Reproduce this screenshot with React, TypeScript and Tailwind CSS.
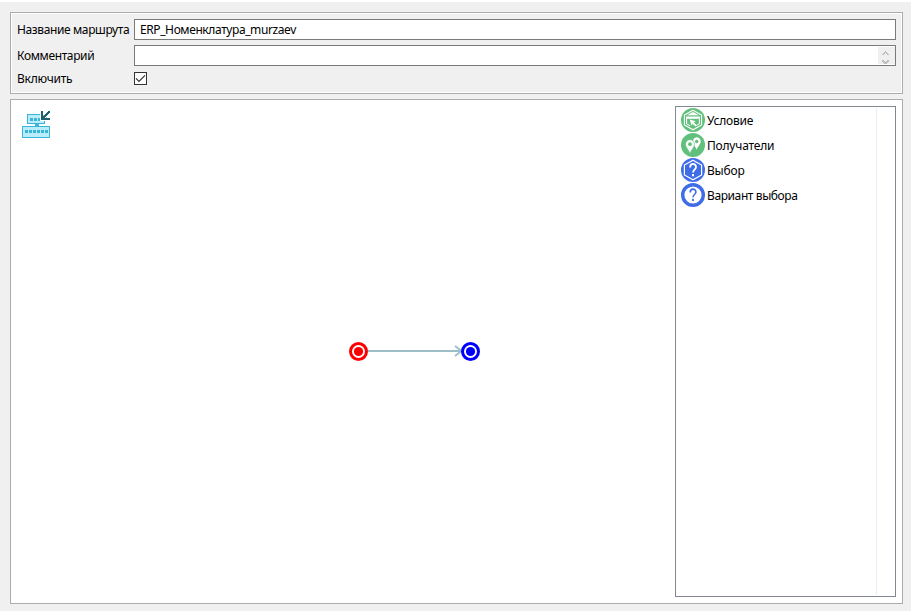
import type { ReactNode } from "react";

function KeyboardIcon() {
  return (
    <svg className="block" width="30" height="28" viewBox="0 0 30 28" shapeRendering="crispEdges">
      <path d="M5.500 4.500h17v9h-17z" fill="#b9edfb" stroke="#3ab5da" />
      <path d="M13 14h4v2h-4z" fill="#3ab5da" />
      <path d="M.5 16.500h27v11h-27z" fill="#b9edfb" stroke="#3ab5da" />
      <path d="M8 8h3v3h-3zM12 8h3v3h-3zM16 8h2v3h-2z" fill="#3ab5da" />
      <path d="M3 20h3v3h-3zM7 20h3v3h-3zM11 20h3v3h-3zM15 20h3v3h-3zM19 20h3v3h-3zM23 20h3v3h-3z" fill="#3ab5da" />
      <path d="M18 0h11v11h-11z" fill="#fff" />
      <path d="M19 1h2v7h7v2h-9z" fill="#1f5f6e" />
      <path d="M26 1h2v2h-1v1h-1v1h-1v1h-1v1h-1v1h-2v-2h1v-1h1v-1h1v-1h1v-1h1z" fill="#1f5f6e" />
      <path d="M21 5h1v1h-1zM24 7h1v1h-1z" fill="#7fe0b8" />
    </svg>
  );
}

function ConditionIcon() {
  return (
    <svg className="block" width="24" height="24" viewBox="0 0 24 24" fill="none">
      <circle cx="12" cy="12" r="12" fill="#61c07c" />
      <path d="M12 2.200l8.600 4.900v9.800L12 21.800l-8.600-4.900V7.100z" stroke="#fff" strokeWidth="1.100" />
      <path d="M6 7.300L12 4l6 3.300z" fill="#fff" />
      <path d="M5 8.500h14v2.300H5z" fill="#fff" />
      <path d="M5.600 10.800v5l3.600 2M18.400 10.800v5l-3.200 1.800" stroke="#fff" strokeWidth="1" />
      <path d="M8.800 11.600l6 1.700-1.900 1.200 2.700 2.700-1.300 1.300-2.700-2.700-1.100 1.900z" fill="#fff" />
    </svg>
  );
}

function RecipientsIcon() {
  return (
    <svg className="block" width="24" height="24" viewBox="0 0 24 24">
      <circle cx="12" cy="12" r="12" fill="#61c07c" />
      <path d="M15.500 4.300a4.200 4.200 0 0 1 4.200 4.200c0 2.400-2.600 4.700-4.200 8.200-.6-1.800-1.500-2.900-2.200-4.100A5 5 0 0 0 12 8a4 4 0 0 1 3.500-3.700z" fill="#fff" />
      <circle cx="15.700" cy="8.500" r="1.700" fill="#61c07c" />
      <path d="M9 6.800a4.400 4.400 0 0 0-4.400 4.400c0 3 2.900 5 4.400 9.300 1.500-4.300 4.400-6.300 4.400-9.300A4.400 4.400 0 0 0 9 6.800z" fill="#fff" stroke="#61c07c" strokeWidth=".5" />
      <circle cx="9" cy="11.200" r="1.900" fill="#61c07c" />
    </svg>
  );
}

function ChoiceIcon() {
  return (
    <svg className="block" width="24" height="24" viewBox="0 0 24 24" fill="none">
      <circle cx="12" cy="12" r="12" fill="#3f6de8" />
      <path d="M12 2.200l8.600 4.900v9.800L12 21.800l-8.600-4.900V7.100z" stroke="#fff" strokeWidth="1.200" />
      <path d="M9.100 9.400c0-4.600 5.900-4.400 5.900-.4 0 2.600-3 2.700-3 5.500" stroke="#fff" strokeWidth="1.800" />
      <path d="M11 16h2v2.200h-2z" fill="#fff" />
    </svg>
  );
}

function VariantIcon() {
  return (
    <svg className="block" width="24" height="24" viewBox="0 0 24 24" fill="none">
      <circle cx="12" cy="12" r="10.300" fill="#fff" stroke="#3f6de8" strokeWidth="3.400" />
      <path d="M9.200 9.400c0-4.400 5.700-4.300 5.700-.4 0 2.500-2.900 2.600-2.900 5.300" stroke="#3f6de8" strokeWidth="1.600" />
      <path d="M11.100 15.800h1.800v2.200h-1.800z" fill="#3f6de8" />
    </svg>
  );
}

function Node({ color }: { color: string }) {
  return (
    <svg className="block" width="19" height="19" viewBox="0 0 19 19">
      <circle cx="9.500" cy="9.500" r="8" fill="#fff" stroke={color} strokeWidth="3" />
      <circle cx="9.500" cy="9.500" r="4.600" fill={color} />
    </svg>
  );
}

function ToolRow({ icon, children }: { icon: ReactNode; children: ReactNode }) {
  return (
    <li className="flex h-[25px] items-start gap-[2px]">
      {icon}
      <span className="mt-px leading-6 whitespace-nowrap">{children}</span>
    </li>
  );
}

export default function App() {
  return (
    <div className="flex h-[611px] w-[911px] flex-col border-t-2 border-white bg-[#f0f0f0] pt-[10px] pr-2 pl-[10px] font-['Noto_Sans','Open_Sans',sans-serif] text-[12px] text-black">
      <section className="h-[82px] w-[893px] border border-[#acacac]">
        <div className="h-full border border-white pt-[5px] pl-[5px]">
          <div className="flex h-[21px] items-center">
            <label className="w-[117px] tracking-[-0.38px] whitespace-nowrap">Название маршрута</label>
            <div className="flex h-[21px] w-[762px] items-center border border-[#7a7a7a] bg-white pl-[5px] tracking-[-0.4px]">
              ERP_Номенклатура_murzaev
            </div>
          </div>
          <div className="mt-[5px] flex h-[21px] items-center">
            <label className="w-[117px] tracking-[-0.36px]">Комментарий</label>
            <div className="flex h-[21px] w-[762px] justify-end border border-[#7a7a7a] bg-white py-px">
              <div className="w-[17px] bg-[#f0f0f0]">
                <svg className="block" width="17" height="17" viewBox="0 0 17 17" fill="#bfbfbf" shapeRendering="crispEdges">
                  <path d="M7 4h1v1h1v1h1v1h1v1H9V7H8V6H7v1H6v1H4V7h1V6h1V5h1z" />
                  <path d="M4 13h2v1h1v1h1v-1h1v-1h2v2h-1v1H9v1H6v-1H5v-1H4z" />
                </svg>
              </div>
            </div>
          </div>
          <div className="mt-[3px] flex h-[19px] items-center">
            <label className="w-[117px] tracking-[-0.25px]">Включить</label>
            <div className="mb-px size-[13px] border border-[#333] bg-white">
              <svg className="block" width="11" height="11" viewBox="0 0 11 11" fill="none" stroke="#333" strokeWidth="1.200">
                <path d="M1 5.300L4 8.300 10 2.300" />
              </svg>
            </div>
          </div>
        </div>
      </section>

      <section className="mt-[5px] flex h-[505px] w-[893px] justify-between border border-[#acacac] bg-white pt-[6px] pr-[6px]">
        <div className="relative h-[491px] w-[664px]">
          <div className="absolute top-[4px] left-[11px]">
            <KeyboardIcon />
          </div>
          <svg className="absolute top-[238px] left-[350px]" width="104" height="14" viewBox="0 0 104 14" fill="none" stroke="#9cbdc4">
            <path d="M7 7H100" strokeWidth="2" />
            <path d="M94 2l6.500 5-6.500 5" strokeWidth="1.800" />
          </svg>
          <div className="absolute top-[236px] left-[338px]">
            <Node color="#ff0000" />
          </div>
          <div className="absolute top-[236px] left-[450px]">
            <Node color="#0000ff" />
          </div>
        </div>
        <aside className="flex h-[491px] w-[221px] border border-[#828790] py-px pl-[5px]">
          <ul className="w-[195px] tracking-[-0.2px]">
            <ToolRow icon={<ConditionIcon />}>Условие</ToolRow>
            <ToolRow icon={<RecipientsIcon />}>Получатели</ToolRow>
            <ToolRow icon={<ChoiceIcon />}>Выбор</ToolRow>
            <ToolRow icon={<VariantIcon />}>
              <span className="tracking-[-0.4px]">Вариант выбора</span>
            </ToolRow>
          </ul>
          <div className="w-px bg-[#e5f0fb]" />
        </aside>
      </section>
    </div>
  );
}
